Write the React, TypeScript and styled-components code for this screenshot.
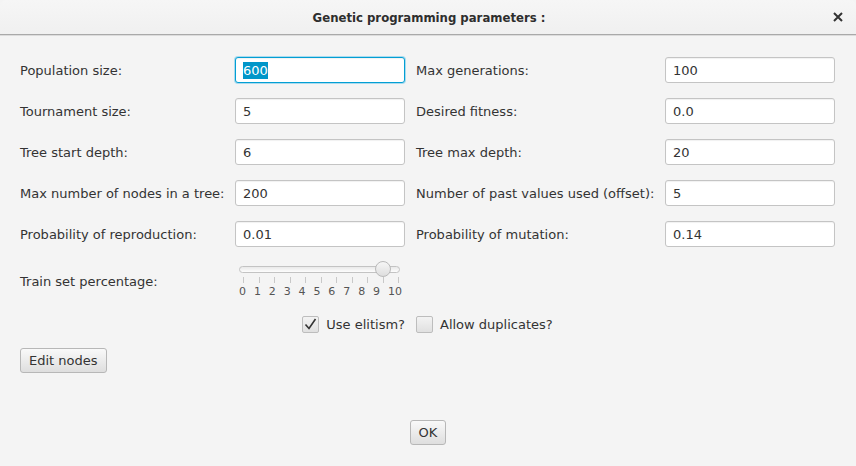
import React from 'react';
import styled, { createGlobalStyle } from 'styled-components';

const GlobalStyle = createGlobalStyle`
  html, body {
    margin: 0;
    padding: 0;
    background: #f4f4f4;
  }
  body {
    font-family: 'DejaVu Sans', 'Noto Sans', sans-serif;
  }
`;

const Window = styled.div`
  width: 856px;
  height: 466px;
  display: flex;
  flex-direction: column;
  background: #f4f4f4;
  color: #333;
  overflow: hidden;
`;

const TitleBar = styled.div`
  height: 34px;
  flex-shrink: 0;
  display: flex;
  align-items: center;
  justify-content: center;
  position: relative;
  background: linear-gradient(#f6f6f6, #f0f0f0);
  border-bottom: 1px solid #a9a9a9;
  box-shadow: 0 1px 0 #dcdcdc;
  border-radius: 6px 6px 0 0;
`;

const Title = styled.div`
  font-family: 'DejaVu Sans Condensed', 'DejaVu Sans', sans-serif;
  font-weight: 600;
  font-size: 13px;
  color: #2e2e2e;
  padding-left: 2px;
`;

const CloseButton = styled.div`
  position: absolute;
  right: 13px;
  top: 12px;
  width: 10px;
  height: 10px;
  display: flex;
`;

const Body = styled.div`
  flex: 1;
  display: flex;
  flex-direction: column;
  padding: 22px 21px 0 20px;
`;

const FormGrid = styled.div`
  display: grid;
  grid-template-columns: 215px 170px 260px 170px;
  grid-auto-rows: 26px;
  row-gap: 15px;
  align-items: center;
  & > :nth-child(4n + 3) {
    margin-left: 11px;
  }
`;

const Label = styled.span`
  font-size: 13px;
  color: #333;
  white-space: nowrap;
`;

const Field = styled.div<{ $focused?: boolean }>`
  height: 26px;
  box-sizing: border-box;
  background: #fff;
  border: 1px solid ${(p) => (p.$focused ? '#039ed3' : '#c4c4c4')};
  border-radius: 3px;
  box-shadow: ${(p) =>
    p.$focused
      ? '0 0 0 1px #a8dbef, inset 0 1px 1px rgba(0,0,0,0.06)'
      : 'inset 0 1px 1px rgba(0,0,0,0.06)'};
  display: flex;
  align-items: center;
  padding-left: 7px;
  font-size: 13px;
  color: #333;
`;

const Selected = styled.span`
  background: #0096c9;
  color: #fff;
  padding: 1px 0;
`;

const SliderRow = styled.div`
  display: grid;
  grid-template-columns: 215px 170px;
  align-items: center;
  margin-top: 14px;
  height: 36px;
`;

const LowLabel = styled(Label)`
  margin-top: 4px;
`;

const SliderBox = styled.div`
  display: flex;
  flex-direction: column;
  width: 166px;
  padding-left: 4px;
`;

const TrackWrap = styled.div`
  position: relative;
  height: 16px;
  display: flex;
  align-items: center;
`;

const Track = styled.div`
  width: 161px;
  height: 7px;
  box-sizing: border-box;
  border: 1px solid #c3c3c3;
  border-radius: 4px;
  background: linear-gradient(#e9e9e9, #fdfdfd);
`;

const Thumb = styled.div`
  position: absolute;
  left: 136px;
  top: 0;
  width: 16px;
  height: 16px;
  box-sizing: border-box;
  border-radius: 50%;
  border: 1px solid #b9b9b9;
  background: linear-gradient(#f6f6f6, #dedede);
`;

const Ticks = styled.div`
  display: flex;
  justify-content: space-between;
  width: 156px;
  margin-left: 4px;
  height: 6px;
`;

const Tick = styled.div`
  width: 1px;
  height: 6px;
  background: #c8c8c8;
`;

const TickLabels = styled.div`
  display: flex;
  justify-content: space-between;
  width: 163px;
  margin-left: 0px;
  margin-top: 2px;
  font-size: 11px;
  color: #555;
`;

const CheckRow = styled.div`
  display: flex;
  align-items: center;
  justify-content: center;
  gap: 11px;
  margin-top: 18px;
  height: 18px;
`;

const CheckItem = styled.label`
  display: flex;
  align-items: center;
  gap: 7px;
  font-size: 13px;
  color: #333;
`;

const Box = styled.span`
  width: 17px;
  height: 17px;
  box-sizing: border-box;
  border: 1px solid #bdbdbd;
  border-radius: 2px;
  background: linear-gradient(#f3f3f3, #e0e0e0);
  display: flex;
  align-items: center;
  justify-content: center;
`;

const Button = styled.div`
  height: 25px;
  box-sizing: border-box;
  padding: 0 8px;
  display: inline-flex;
  align-items: center;
  border: 1px solid #b7b7b7;
  border-radius: 3px;
  background: linear-gradient(#f9f9f9, #dedede);
  font-size: 13px;
  color: #333;
`;

const EditRow = styled.div`
  margin-top: 15px;
  display: flex;
`;

const Footer = styled.div`
  margin-top: 47px;
  display: flex;
  justify-content: center;
  padding-left: 1px;
`;

const rows: [string, string, string, string][] = [
  ['Population size:', '600', 'Max generations:', '100'],
  ['Tournament size:', '5', 'Desired fitness:', '0.0'],
  ['Tree start depth:', '6', 'Tree max depth:', '20'],
  ['Max number of nodes in a tree:', '200', 'Number of past values used (offset):', '5'],
  ['Probability of reproduction:', '0.01', 'Probability of mutation:', '0.14'],
];

export default function App() {
  return (
    <Window>
      <GlobalStyle />
      <TitleBar>
        <Title>Genetic programming parameters :</Title>
        <CloseButton>
          <svg width="10" height="10" viewBox="0 0 10 10">
            <path d="M1 1 L9 9 M9 1 L1 9" stroke="#333" strokeWidth="2" />
          </svg>
        </CloseButton>
      </TitleBar>
      <Body>
        <FormGrid>
          {rows.map(([l1, v1, l2, v2], i) => (
            <React.Fragment key={l1}>
              <Label>{l1}</Label>
              <Field $focused={i === 0}>{i === 0 ? <Selected>{v1}</Selected> : v1}</Field>
              <Label>{l2}</Label>
              <Field>{v2}</Field>
            </React.Fragment>
          ))}
        </FormGrid>

        <SliderRow>
          <LowLabel>Train set percentage:</LowLabel>
          <SliderBox>
            <TrackWrap>
              <Track />
              <Thumb />
            </TrackWrap>
            <Ticks>
              {Array.from({ length: 11 }, (_, i) => (
                <Tick key={i} />
              ))}
            </Ticks>
            <TickLabels>
              {Array.from({ length: 11 }, (_, i) => (
                <span key={i}>{i}</span>
              ))}
            </TickLabels>
          </SliderBox>
        </SliderRow>

        <CheckRow>
          <CheckItem>
            <Box>
              <svg width="13" height="12" viewBox="0 0 13 12">
                <path d="M1.5 6.5 L5 10.5 L11.5 1" stroke="#333" strokeWidth="1.6" fill="none" />
              </svg>
            </Box>
            Use elitism?
          </CheckItem>
          <CheckItem>
            <Box />
            Allow duplicates?
          </CheckItem>
        </CheckRow>

        <EditRow>
          <Button>Edit nodes</Button>
        </EditRow>

        <Footer>
          <Button>OK</Button>
        </Footer>
      </Body>
    </Window>
  );
}
